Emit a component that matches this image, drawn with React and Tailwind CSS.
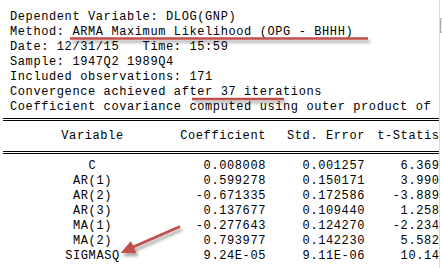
import React from 'react';

const infoLines = [
    'Dependent Variable: DLOG(GNP)',
    'Method: ARMA Maximum Likelihood (OPG - BHHH)',
    'Date: 12/31/15   Time: 15:59',
    'Sample: 1947Q2 1989Q4',
    'Included observations: 171',
    'Convergence achieved after 37 iterations',
    'Coefficient covariance computed using outer product of',
];

const rows = [
    ['C', '0.008008', '0.001257', '6.369547'],
    ['AR(1)', '0.599278', '0.150171', '3.990640'],
    ['AR(2)', '-0.671335', '0.172586', '-3.889858'],
    ['AR(3)', '0.137677', '0.109440', '1.258013'],
    ['MA(1)', '-0.277643', '0.124270', '-2.234191'],
    ['MA(2)', '0.793977', '0.142230', '5.582339'],
    ['SIGMASQ', '9.24E-05', '9.11E-06', '10.14265'],
];

// one table line: centred name, then right-aligned number columns
const Row = ({ cells }) => (
    <div className="flex pl-[3px] w-max">
        <div className="w-[176px] pl-[3px] text-center shrink-0">{cells[0]}</div>
        <div className="w-[87px] text-right shrink-0">{cells[1]}</div>
        <div className="w-[99px] text-right shrink-0">{cells[2]}</div>
        <div className="w-[98px] text-right shrink-0">{cells[3]}</div>
    </div>
);

const DoubleRule = ({ className = '' }) => (
    <div className={`ml-[3px] border-t-[3px] border-double border-black ${className}`} />
);

export default function App() {
    return (
        <div className="relative w-[442px] h-[268px] bg-white flex overflow-hidden">
            {/* EViews output pane */}
            <div className="flex-1 min-w-0 overflow-hidden font-['Liberation_Mono','DejaVu_Sans_Mono',monospace] text-[12px] leading-[15px] tracking-[0.6px] text-black">
                <div className="pl-[10px] pt-[10px] whitespace-pre">
                    {infoLines.map((line) => (
                        <div key={line}>{line}</div>
                    ))}
                </div>

                <DoubleRule className="mt-[3px]" />
                <div className="pt-[8px] pb-[7px] whitespace-pre">
                    <Row cells={['Variable', 'Coefficient', 'Std. Error', 't-Statistic']} />
                </div>
                <DoubleRule />

                <div className="pt-[5px] whitespace-pre">
                    {rows.map((r) => (
                        <Row key={r[0]} cells={r} />
                    ))}
                </div>
            </div>

            {/* scrollbar edge */}
            <div className="w-[3px] shrink-0 border-l border-[#d9d9d9] pt-[18px]">
                <div className="h-[15px] border-y border-l border-[#a6a6a6] bg-[#efefef] rounded-l-[2px]" />
            </div>

            {/* red annotations */}
            <svg className="absolute inset-0 pointer-events-none" width="442" height="268" viewBox="0 0 442 268">
                <defs>
                    <filter id="shadow" x="-20%" y="-50%" width="140%" height="300%">
                        <feDropShadow dx="2" dy="3" stdDeviation="1.5" floodColor="#000" floodOpacity="0.35" />
                    </filter>
                </defs>
                <g filter="url(#shadow)" stroke="#c0504d" fill="#c0504d">
                    <line x1="70" y1="38.5" x2="368" y2="38.5" strokeWidth="2.5" />
                    <line x1="192" y1="99" x2="284" y2="99" strokeWidth="2.5" />
                    <line x1="180" y1="226.5" x2="132" y2="247.5" strokeWidth="3" />
                    <polygon points="121.5,252.5 130.8,241.8 135.8,252.9" strokeWidth="1" strokeLinejoin="round" />
                </g>
            </svg>
        </div>
    );
}
